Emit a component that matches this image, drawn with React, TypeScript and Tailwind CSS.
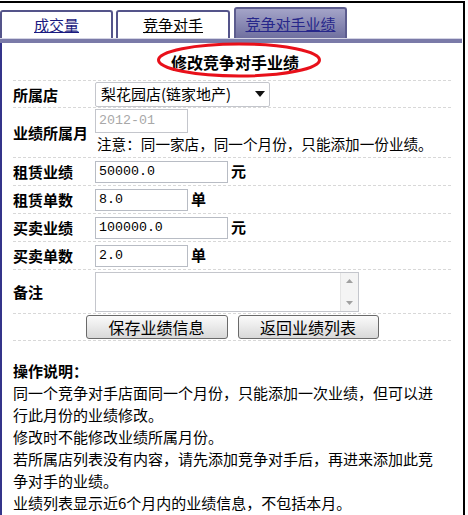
const cjk = { fontFamily: '"Noto Sans CJK SC", "Noto Sans", sans-serif' };
const mono = { fontFamily: '"Liberation Mono", "Noto Sans CJK SC", monospace' };

function Row({
  label,
  h,
  children,
}: {
  label: string;
  h: string;
  children: React.ReactNode;
}) {
  return (
    <div className={`flex items-center border-b border-dashed border-[#d8d8d8] ${h}`}>
      <div className="w-[82px] shrink-0 text-[15px] font-bold leading-none text-black">
        {label}
      </div>
      <div className="flex items-center">{children}</div>
    </div>
  );
}

function Field({ value, w, unit }: { value: string; w: string; unit?: string }) {
  return (
    <>
      <div
        className={`flex h-[22px] items-center border border-[#b8bcc4] bg-white pl-[3px] text-[13.3px] text-black ${w}`}
        style={mono}
      >
        {value}
      </div>
      {unit && <span className="ml-[3px] text-[15px] font-bold">{unit}</span>}
    </>
  );
}

export default function App() {
  return (
    <div className="h-[515px] w-[468px] overflow-hidden bg-white text-black" style={cjk}>
      <div className="mt-px h-[514px] w-[465px] border-t-2 border-r-2 border-black">
        {/* tabs */}
        <div className="flex h-[35px] items-end gap-[3px]">
          <div className="flex h-[28px] w-[113px] items-center justify-center rounded-t-[3px] border-2 border-b-0 border-[#54548a] bg-white text-[15px] text-[#1a1a80] underline">
            成交量
          </div>
          <div className="flex h-[28px] w-[114px] items-center justify-center rounded-t-[3px] border-2 border-b-0 border-[#54548a] bg-white text-[15px] text-black underline">
            竞争对手
          </div>
          <div className="ml-px flex h-[31px] w-[113px] items-center justify-center rounded-t-[3px] border-2 border-b-0 border-[#5c5c8e] bg-gradient-to-b from-[#a4a4c8] to-[#70709f] pt-[2px] text-[15px] text-[#26268a] underline">
            竞争对手业绩
          </div>
        </div>
        <div className="h-[5px] w-[462px] border-t border-[#d4d4e4] bg-[#7a7aa8]" />

        {/* panel */}
        <div className="h-[480px] border-l-2 border-[#34348a]">
          <div className="ml-[11px] w-[438px]">
            <div className="relative flex h-[38px] items-center justify-center border-b border-dashed border-[#d8d8d8] pl-[6px] text-[16px] font-bold">
              修改竞争对手业绩
              <svg
                className="absolute left-[143px] top-[-1px]"
                width="166"
                height="36"
                viewBox="0 0 166 36"
              >
                <ellipse cx="83" cy="18" rx="80.5" ry="16" fill="none" stroke="#e8101a" strokeWidth="3" />
              </svg>
            </div>

            <Row label="所属店" h="h-[27px]">
              <div className="flex h-[25px] w-[175px] items-center justify-between rounded-[2px] border border-[#c4c6cc] bg-white pl-[5px] pr-[4px] text-[15px]">
                <span>梨花园店(链家地产)</span>
                <svg width="10" height="6" viewBox="0 0 10 6">
                  <path d="M0 0 L10 0 L5 6 Z" fill="#111" />
                </svg>
              </div>
            </Row>

            <div className="flex h-[50px] items-center border-b border-dashed border-[#d8d8d8]">
              <div className="w-[82px] shrink-0 text-[15px] font-bold leading-none">业绩所属月</div>
              <div className="flex flex-col self-start pt-[1px]">
                <div
                  className="flex h-[24px] w-[93px] items-center border border-[#c4c6cc] bg-white pl-[3px] text-[13.3px] text-[#a8a8a8]"
                  style={mono}
                >
                  2012-01
                </div>
                <div className="ml-[2px] text-[14.6px] leading-[22px]">
                  注意：同一家店，同一个月份，只能添加一份业绩。
                </div>
              </div>
            </div>

            <Row label="租赁业绩" h="h-[28px]">
              <Field value="50000.0" w="w-[133px]" unit="元" />
            </Row>
            <Row label="租赁单数" h="h-[28px]">
              <Field value="8.0" w="w-[93px]" unit="单" />
            </Row>
            <Row label="买卖业绩" h="h-[28px]">
              <Field value="100000.0" w="w-[133px]" unit="元" />
            </Row>
            <Row label="买卖单数" h="h-[28px]">
              <Field value="2.0" w="w-[93px]" unit="单" />
            </Row>

            <Row label="备注" h="h-[44px]">
              <div className="flex h-[40px] w-[264px] border border-[#c4c6cc] bg-white">
                <div className="flex-1" />
                <div className="flex w-[18px] flex-col items-center justify-between border-l border-[#e4e4e4] bg-[#f4f4f4] py-[6px]">
                  <svg width="7" height="4" viewBox="0 0 7 4">
                    <path d="M0 4 L7 4 L3.5 0 Z" fill="#a0a0a0" />
                  </svg>
                  <svg width="7" height="4" viewBox="0 0 7 4">
                    <path d="M0 0 L7 0 L3.5 4 Z" fill="#a0a0a0" />
                  </svg>
                </div>
              </div>
            </Row>

            <div className="flex h-[27px] items-center justify-center gap-[10px] border-b border-dashed border-[#d8d8d8]">
              <button className="flex h-[24px] w-[142px] items-center justify-center rounded-[3px] border border-[#6a6a6a] bg-gradient-to-b from-[#fbfbfb] to-[#d8d8d8] text-[16px] leading-none text-black">
                保存业绩信息
              </button>
              <button className="flex h-[24px] w-[141px] items-center justify-center rounded-[3px] border border-[#6a6a6a] bg-gradient-to-b from-[#fbfbfb] to-[#d8d8d8] text-[16px] leading-none text-black">
                返回业绩列表
              </button>
            </div>

            <div className="mt-[19px] w-[425px] text-[15px] leading-[22px]">
              <div className="font-bold">操作说明：</div>
              <div>同一个竞争对手店面同一个月份，只能添加一次业绩，但可以进行此月份的业绩修改。</div>
              <div>修改时不能修改业绩所属月份。</div>
              <div>若所属店列表没有内容，请先添加竞争对手后，再进来添加此竞争对手的业绩。</div>
              <div>业绩列表显示近6个月内的业绩信息，不包括本月。</div>
            </div>
          </div>
        </div>
      </div>
    </div>
  );
}
